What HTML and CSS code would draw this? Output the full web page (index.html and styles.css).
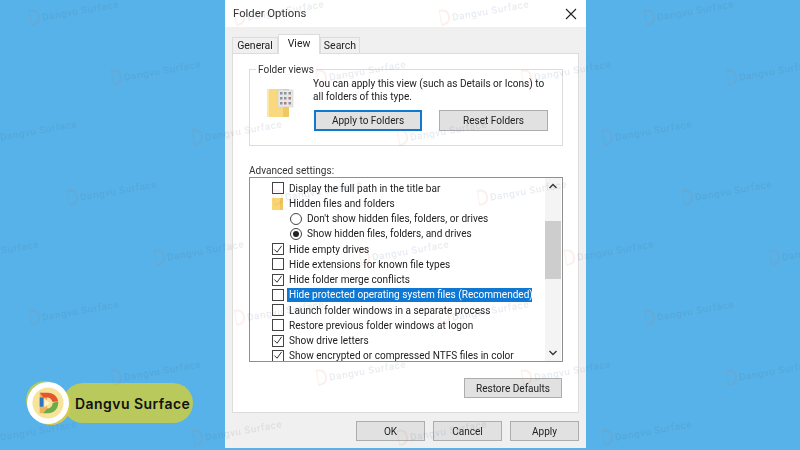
FILE: index.html
```html
<!DOCTYPE html>
<html lang="en">
<head>
<meta charset="utf-8">
<title>Folder Options</title>
<link rel="stylesheet" href="styles.css">
</head>
<body>
<div class="desktop">
  <section class="dialog">
    <header class="titlebar">
      <span class="title">Folder Options</span>
      <svg class="close" width="12" height="12" viewBox="0 0 12 12"><path d="M1 1l10 10M11 1L1 11" stroke="#222" stroke-width="1.1" fill="none"/></svg>
    </header>
    <div class="body">
      <nav class="tabs">
        <span class="tab tab-general">General</span>
        <span class="tab tab-active">View</span>
        <span class="tab tab-search">Search</span>
      </nav>
      <div class="panel">
        <fieldset class="group">
          <legend class="legend">Folder views</legend>
          <div class="views">
            <svg class="bigfolder" width="28" height="28" viewBox="0 0 28 28">
              <path d="M0 0h20v28H0z" fill="#f8d97f"/>
              <path d="M0 0h2v28H0z" fill="#fbe7a6"/>
              <path d="M16 0h6v28h-6z" fill="#efc863"/>
              <rect x="11" y="1" width="15" height="17" fill="#e9e7e4" stroke="#d2d0cd" stroke-width=".6"/>
              <g fill="#8c939c">
                <rect x="13" y="3" width="2.500" height="2.500"/><rect x="17" y="3" width="2.500" height="2.500"/><rect x="21.500" y="3" width="2.500" height="2.500"/>
                <rect x="13" y="8" width="2.500" height="2.500"/><rect x="17" y="8" width="2.500" height="2.500"/><rect x="21.500" y="8" width="2.500" height="2.500" fill="#b07a80"/>
                <rect x="13" y="13" width="2.500" height="2.500"/><rect x="17" y="13" width="2.500" height="2.500" fill="#b07a80"/><rect x="21.500" y="13" width="2.500" height="2.500"/>
              </g>
            </svg>
            <div class="views-main">
              <p class="views-text">You can apply this view (such as Details or Icons) to all folders of this type.</p>
              <div class="views-buttons">
                <span class="btn btn-primary">Apply to Folders</span>
                <span class="btn btn-reset">Reset Folders</span>
              </div>
            </div>
          </div>
        </fieldset>
        <div class="adv-label">Advanced settings:</div>
        <div class="list">
          <div class="rows">
            <div class="row"><span class="cb"></span><span>Display the full path in the title bar</span></div>
            <div class="row"><svg class="tinyfolder" width="12" height="13" viewBox="0 0 12 13"><path d="M0 1h9l2 1v11H0z" fill="#f8d675"/><path d="M8 1h3v12H8z" fill="#eec55e"/></svg><span>Hidden files and folders</span></div>
            <div class="row row-sub"><span class="rb"></span><span>Don't show hidden files, folders, or drives</span></div>
            <div class="row row-sub"><span class="rb rb-on"></span><span>Show hidden files, folders, and drives</span></div>
            <div class="row"><span class="cb"><svg width="11" height="11" viewBox="0 0 11 11"><path d="M1.5 5.5l3 3 5-7" stroke="#333" stroke-width="1.1" fill="none"/></svg></span><span>Hide empty drives</span></div>
            <div class="row"><span class="cb"></span><span>Hide extensions for known file types</span></div>
            <div class="row"><span class="cb"><svg width="11" height="11" viewBox="0 0 11 11"><path d="M1.5 5.5l3 3 5-7" stroke="#333" stroke-width="1.1" fill="none"/></svg></span><span>Hide folder merge conflicts</span></div>
            <div class="row"><span class="cb"></span><span class="selected">Hide protected operating system files (Recommended)</span></div>
            <div class="row"><span class="cb"></span><span>Launch folder windows in a separate process</span></div>
            <div class="row"><span class="cb"></span><span>Restore previous folder windows at logon</span></div>
            <div class="row"><span class="cb"><svg width="11" height="11" viewBox="0 0 11 11"><path d="M1.5 5.5l3 3 5-7" stroke="#333" stroke-width="1.1" fill="none"/></svg></span><span>Show drive letters</span></div>
            <div class="row"><span class="cb"><svg width="11" height="11" viewBox="0 0 11 11"><path d="M1.5 5.5l3 3 5-7" stroke="#333" stroke-width="1.1" fill="none"/></svg></span><span>Show encrypted or compressed NTFS files in color</span></div>
          </div>
          <div class="scrollbar">
            <svg class="chev" width="16" height="16" viewBox="0 0 16 16"><path d="M4.5 10L8 6.5l3.500 3.500" stroke="#333" stroke-width="1.300" fill="none"/></svg>
            <div class="track"><div class="thumb"></div></div>
            <svg class="chev" width="16" height="16" viewBox="0 0 16 16"><path d="M4.500 6L8 9.500 11.500 6" stroke="#333" stroke-width="1.300" fill="none"/></svg>
          </div>
        </div>
        <div class="restore-row"><span class="btn btn-restore">Restore Defaults</span></div>
      </div>
      <footer class="footer">
        <span class="btn btn-foot">OK</span>
        <span class="btn btn-foot">Cancel</span>
        <span class="btn btn-foot">Apply</span>
      </footer>
    </div>
  </section>

  <div class="brand">
    <div class="brand-logo">
      <svg width="24" height="26" viewBox="0 0 26 26">
        <path d="M4 2h8v22H4z" fill="#eeb25a"/>
        <path d="M4 2h9c6 0 10 4 11 9l-6 1c-1-3-3-5-6-5H8z" fill="#e2572f"/>
        <path d="M4 7h4v10H4z" fill="#2f73c4"/>
        <path d="M24 11c1 7-4 13-11 13H8l4-5c4 0 6-3 6-6z" fill="#6bab4a"/>
        <path d="M9 8l6 5-6 5z" fill="#fff6d8"/>
      </svg>
    </div>
    <div class="brand-pill">Dangvu Surface</div>
  </div>

  <div class="marks">
    <div class="mark-row o0"><span class="mark">Dangvu Surface</span><span class="mark">Dangvu Surface</span><span class="mark">Dangvu Surface</span><span class="mark">Dangvu Surface</span></div>
    <div class="mark-row o1"><span class="mark">Dangvu Surface</span><span class="mark">Dangvu Surface</span><span class="mark">Dangvu Surface</span><span class="mark">Dangvu Surface</span></div>
    <div class="mark-row o2"><span class="mark">Dangvu Surface</span><span class="mark">Dangvu Surface</span><span class="mark">Dangvu Surface</span><span class="mark">Dangvu Surface</span></div>
    <div class="mark-row o3"><span class="mark">Dangvu Surface</span><span class="mark">Dangvu Surface</span><span class="mark">Dangvu Surface</span><span class="mark">Dangvu Surface</span></div>
    <div class="mark-row o4"><span class="mark">Dangvu Surface</span><span class="mark">Dangvu Surface</span><span class="mark">Dangvu Surface</span><span class="mark">Dangvu Surface</span><span class="mark">Dangvu Surface</span></div>
    <div class="mark-row o0"><span class="mark">Dangvu Surface</span><span class="mark">Dangvu Surface</span><span class="mark">Dangvu Surface</span><span class="mark">Dangvu Surface</span></div>
    <div class="mark-row o1"><span class="mark">Dangvu Surface</span><span class="mark">Dangvu Surface</span><span class="mark">Dangvu Surface</span><span class="mark">Dangvu Surface</span></div>
    <div class="mark-row o2"><span class="mark">Dangvu Surface</span><span class="mark">Dangvu Surface</span><span class="mark">Dangvu Surface</span><span class="mark">Dangvu Surface</span></div>
  </div>
</div>
</body>
</html>
```

FILE: styles.css
```css
* { box-sizing: border-box; }
html, body { margin: 0; padding: 0; }
body { width: 800px; height: 450px; overflow: hidden; font-family: Roboto, "Liberation Sans", sans-serif; }

.desktop { position: relative; width: 800px; height: 450px; background: #56b2e8; overflow: hidden; }

.dialog {
  position: absolute; left: 225px; top: 0; width: 361px; height: 448px;
  background: #f0f0f0; color: #222; font-size: 10.050px; line-height: 13px;
  display: flex; flex-direction: column; filter: blur(.4px);
}
.titlebar { height: 27px; flex: none; background: #fff; display: flex; align-items: center; justify-content: space-between; padding: 0 9px 0 8px; }
.title { font-size: 11.300px; color: #333; }

.body { flex: 1; display: flex; flex-direction: column; padding: 0 7px; }

.tabs { height: 26px; flex: none; display: flex; align-items: flex-end; position: relative; z-index: 1; }
.tab { height: 16px; padding-top: 1px; background: #f0f0f0; border: 1px solid #dcdcdc; border-bottom: 0; text-align: center; font-size: 10.500px; }
.tab-general { width: 46px; }
.tab-active { width: 42px; height: 20px; padding-top: 2px; background: #fff; margin-bottom: -1px; }
.tab-search { width: 40px; }

.panel { height: 360px; flex: none; background: #fff; border: 1px solid #dcdcdc; padding: 9px 15px 0 16px; display: flex; flex-direction: column; }

.group { margin: 0; height: 83px; flex: none; border: 1px solid #dcdcdc; padding: 0 0 0 17px; }
.legend { padding: 0 2px; margin-left: -11px; color: #333; }
.views { display: flex; gap: 19px; margin-top: 1px; }
.bigfolder { margin-top: 12px; flex: none; }
.views-main { flex: 1; min-width: 0; }
.views-text { margin: 0 0 0 -1px; width: 240px; line-height: 13px; }
.views-buttons { display: flex; gap: 17px; margin-top: 7px; }

.btn { display: flex; align-items: center; justify-content: center; background: #e1e1e1; border: 1px solid #adadad; color: #222; }
.btn-primary { width: 108px; height: 21px; border: 2px solid #0f78cf; }
.btn-reset { width: 109px; height: 21px; }

.adv-label { margin-top: 18px; height: 13px; flex: none; color: #333; }

.list { height: 185px; flex: none; border: 1px solid #8f8f8f; background: #fff; display: flex; overflow: hidden; }
.rows { flex: 1; min-width: 0; padding-top: 2.500px; }
.row { height: 15.250px; display: flex; align-items: center; gap: 5px; padding-left: 22px; white-space: nowrap; }
.row-sub { padding-left: 40px; }
.cb { width: 12px; height: 12px; flex: none; border: 1px solid #444; display: flex; align-items: center; justify-content: center; }
.rb { width: 12px; height: 12px; flex: none; border: 1px solid #444; border-radius: 50%; display: flex; align-items: center; justify-content: center; }
.rb-on::after { content: ""; width: 6px; height: 6px; border-radius: 50%; background: #222; }
.tinyfolder { flex: none; }
.selected { background: #0f78d4; color: #fff; margin-left: -2px; padding: 0 2px; height: 14px; line-height: 14px; width: 245px; }

.scrollbar { width: 16px; flex: none; display: flex; flex-direction: column; margin-right: 1px; background: #f4f4f4; }
.chev { flex: none; }
.track { flex: 1; padding-top: 27px; }
.thumb { height: 58px; background: #cdcdcd; }

.restore-row { display: flex; justify-content: flex-end; margin-top: 16px; padding-right: 1px; }
.btn-restore { width: 98px; height: 20px; }

.footer { display: flex; justify-content: flex-end; gap: 8px; margin-top: 8px; }
.btn-foot { width: 69px; height: 20px; }

.brand { position: absolute; left: 27px; top: 381px; width: 166px; height: 44px; display: flex; align-items: center; }
.brand-logo {
  position: relative; z-index: 1; width: 42px; height: 42px; flex: none; border-radius: 50%;
  background: radial-gradient(circle, #f8e39a 0 15px, #fff 16px);
  box-shadow: 3px 2px 0 -1px #d6c84a, -3px -3px 0 -2px #b9c95a;
  display: flex; align-items: center; justify-content: center;
}
.brand-pill {
  width: 130px; height: 40px; margin-left: -6px; background: #b9c95c; border-radius: 20px;
  font-family: Inter, "Liberation Sans", sans-serif; font-weight: 600; font-size: 14px; letter-spacing: .45px;
  color: #111; display: flex; align-items: center; padding-left: 12px; white-space: nowrap;
}

.marks { position: absolute; left: 0; top: -12px; pointer-events: none; }
.mark-row { display: flex; height: 60px; align-items: center; width: 1100px; }
.mark { width: 205px; flex: none; font-size: 10px; font-weight: 500; color: rgba(80,105,135,.14); transform: rotate(-10deg); transform-origin: 0 50%; white-space: nowrap; letter-spacing: .5px; }
.mark::before { content: ""; display: inline-block; width: 7px; height: 12px; margin-right: 2px; border: 2px solid rgba(225,110,70,.1); border-left-width: 1px; border-radius: 0 7px 7px 0; vertical-align: -3px; }
.o0 { margin-left: 30px; }
.o1 { margin-left: 112px; }
.o2 { margin-left: -12px; }
.o3 { margin-left: 68px; }
.o4 { margin-left: -50px; }
```
